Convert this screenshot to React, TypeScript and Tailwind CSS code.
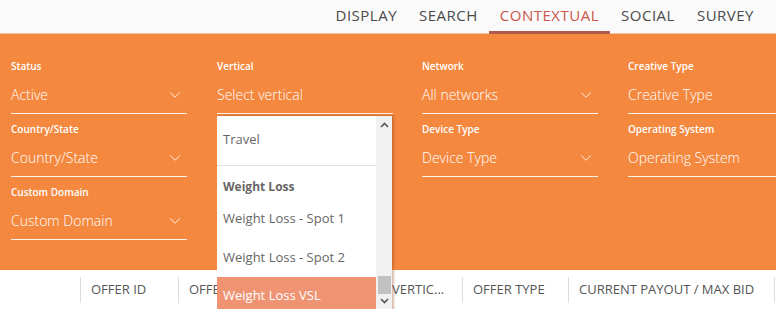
import { ChevronDown } from 'lucide-react';

const tabs = ['DISPLAY', 'SEARCH', 'CONTEXTUAL', 'SOCIAL', 'SURVEY'];

const fields = [
  { label: 'Status', value: 'Active', chevron: true },
  { label: 'Vertical', value: 'Select vertical', chevron: false },
  { label: 'Network', value: 'All networks', chevron: true },
  { label: 'Creative Type', value: 'Creative Type', chevron: false },
  { label: 'Country/State', value: 'Country/State', chevron: true },
  { label: '', value: '', chevron: false, hidden: true },
  { label: 'Device Type', value: 'Device Type', chevron: true },
  { label: 'Operating System', value: 'Operating System', chevron: false },
  { label: 'Custom Domain', value: 'Custom Domain', chevron: true },
];

const columns = [
  { label: '', width: 'w-[80px]' },
  { label: 'OFFER ID', width: 'w-[98px]' },
  { label: 'OFFER NAME', width: 'w-[203px]' },
  { label: 'VERTIC...', width: 'w-[81px]' },
  { label: 'OFFER TYPE', width: 'w-[106px]' },
  { label: 'CURRENT PAYOUT / MAX BID', width: 'w-[206px]' },
];

function Field({ label, value, chevron, hidden }: { label: string; value: string; chevron: boolean; hidden?: boolean }) {
  if (hidden) return <div />;
  return (
    <div className="w-[176px] shrink-0 text-white">
      <div className="text-[10px] leading-[14px] font-semibold">{label}</div>
      <div className="h-[41px] flex items-center justify-between border-b border-white/90 pt-[3px]">
        <span className="text-[14px] font-light whitespace-nowrap">{value}</span>
        {chevron && <ChevronDown size={18} strokeWidth={1.3} className="mr-[3px] text-white/90" />}
      </div>
    </div>
  );
}

export default function App() {
  return (
    <div className="w-[776px] h-[309px] overflow-hidden bg-white relative" style={{ fontFamily: '"Open Sans", sans-serif' }}>
      {/* Tabs */}
      <header className="h-[34px] bg-[#fafafa] border-b border-[#f2c7a3] flex justify-end pr-[11px]">
        {tabs.map((t) => (
          <div
            key={t}
            className={`px-[11px] flex items-center text-[15px] tracking-[0.5px] border-b-[3px] -mb-[1px] ${
              t === 'CONTEXTUAL' ? 'text-[#c9564a] border-[#b05a4c]' : 'text-[#4a4a4a] border-transparent'
            }`}
          >
            {t}
          </div>
        ))}
      </header>

      {/* Filters */}
      <section className="bg-[#f5883f] h-[236px] pl-[11px] pt-[25px]">
        <div className="grid grid-cols-[206px_205px_206px_206px] gap-y-[8px]">
          {fields.map((f, i) => (
            <Field key={i} {...f} />
          ))}
        </div>
      </section>

      {/* Table header */}
      <div className="flex h-[39px] items-center bg-white">
        {columns.map((c, i) => (
          <div
            key={i}
            className={`${c.width} shrink-0 h-[26px] flex items-center pl-[10px] text-[13px] text-[#555] whitespace-nowrap ${
              i > 0 ? 'border-l border-[#ddd]' : ''
            }`}
          >
            {c.label}
          </div>
        ))}
        <div className="h-[26px] border-l border-[#ddd]" />
      </div>

      {/* Open vertical dropdown */}
      <div className="absolute left-[217px] top-[116px] w-[175px] h-[200px] bg-white flex shadow-[2px_-1px_2px_rgba(150,60,20,0.35)]">
        <div className="flex-1 pt-[4px] text-[13px] text-[#666]">
          <div className="h-[38px] flex items-center pl-[6px] pt-[2px]">Travel</div>
          <div className="h-[8px] border-b border-[#e3e3e3]" />
          <div className="h-[34px] flex items-center pl-[6px] pt-[8px] font-bold text-[12px]">Weight Loss</div>
          <div className="h-[38px] flex items-center pl-[6px]">Weight Loss - Spot 1</div>
          <div className="h-[39px] flex items-center pl-[6px]">Weight Loss - Spot 2</div>
          <div className="h-[38px] flex items-center pl-[6px] bg-[#ef9373] text-white">Weight Loss VSL</div>
        </div>
        <div className="w-[16px] bg-[#f1f1f1] flex flex-col items-center">
          <svg width="9" height="6" viewBox="0 0 9 6" className="mt-[6px]">
            <path d="M1 5 L4.5 1.5 L8 5" stroke="#555" strokeWidth="1.6" fill="none" />
          </svg>
          <div className="flex-1" />
          <div className="w-[13px] h-[18px] bg-[#c1c1c1] mb-[4px]" />
          <svg width="9" height="6" viewBox="0 0 9 6" className="mb-[12px]">
            <path d="M1 1 L4.5 4.5 L8 1" stroke="#555" strokeWidth="1.6" fill="none" />
          </svg>
        </div>
      </div>
    </div>
  );
}
